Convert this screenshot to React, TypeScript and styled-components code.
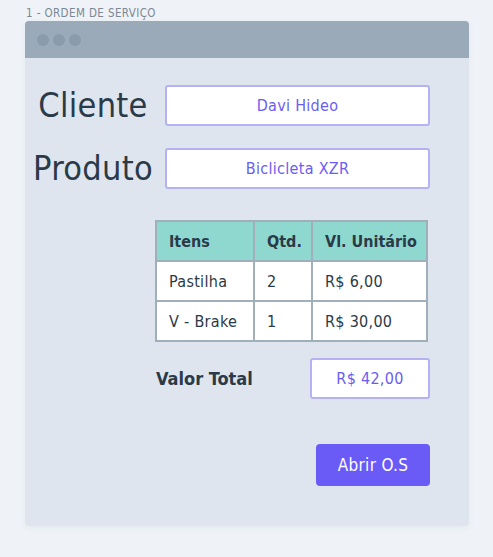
import React from "react";
import styled, { createGlobalStyle } from "styled-components";

const GlobalStyle = createGlobalStyle`
  body {
    margin: 0;
    background: #eff3f7;
    font-family: "DejaVu Sans Condensed", "Roboto", sans-serif;
  }
`;

const items = [
  { name: "Pastilha", qty: 2, price: "R$ 6,00" },
  { name: "V - Brake", qty: 1, price: "R$ 30,00" },
];

const App: React.FC = () => {
  return (
    <Page>
      <GlobalStyle />
      <Caption>1 - ORDEM DE SERVIÇO</Caption>
      <Window>
        <TitleBar>
          <Dot />
          <Dot />
          <Dot />
        </TitleBar>
        <Body>
          <FieldRow>
            <Label>Cliente</Label>
            <Field>Davi Hideo</Field>
          </FieldRow>
          <FieldRow>
            <Label>Produto</Label>
            <Field>Biclicleta XZR</Field>
          </FieldRow>
          <Table>
            <colgroup>
              <col style={{ width: 98 }} />
              <col style={{ width: 58 }} />
              <col style={{ width: 115 }} />
            </colgroup>
            <thead>
              <tr>
                <Th>Itens</Th>
                <Th>Qtd.</Th>
                <Th>Vl. Unitário</Th>
              </tr>
            </thead>
            <tbody>
              {items.map((item) => (
                <tr key={item.name}>
                  <Td>{item.name}</Td>
                  <Td>{item.qty}</Td>
                  <Td>{item.price}</Td>
                </tr>
              ))}
            </tbody>
          </Table>
          <TotalRow>
            <TotalLabel>Valor Total</TotalLabel>
            <TotalBox>R$ 42,00</TotalBox>
          </TotalRow>
          <ButtonRow>
            <OpenButton>Abrir O.S</OpenButton>
          </ButtonRow>
        </Body>
      </Window>
    </Page>
  );
};

const Page = styled.div`
  padding: 6px 24px 32px 25px;
  width: 444px;
`;

const Caption = styled.div`
  font-size: 11.5px;
  letter-spacing: 0.4px;
  color: #7b8794;
  line-height: 15px;
  margin-left: 1px;
`;

const Window = styled.div`
  background: #dfe5ee;
  border-radius: 4px;
  overflow: hidden;
  height: 505px;
  box-shadow: 0 2px 6px rgba(60, 80, 100, 0.06);
`;

const TitleBar = styled.div`
  height: 37px;
  background: #9baab8;
  display: flex;
  align-items: center;
  gap: 4px;
  padding-left: 12px;
`;

const Dot = styled.span`
  width: 12px;
  height: 12px;
  border-radius: 50%;
  background: #8a9bab;
`;

const Body = styled.div`
  padding: 27px 39px 0 2px;
  display: flex;
  flex-direction: column;
`;

const FieldRow = styled.div`
  display: flex;
  align-items: center;
  justify-content: space-between;
  height: 41px;
  margin-bottom: 22px;
`;

const Label = styled.div`
  flex: 1;
  text-align: center;
  padding-right: 6px;
  font-size: 34px;
  line-height: 41px;
  letter-spacing: 0.3px;
  color: #2b3a48;
`;

const Field = styled.div`
  width: 261px;
  height: 37px;
  box-sizing: content-box;
  background: #fff;
  border: 2px solid #b5b2f3;
  border-radius: 3px;
  display: flex;
  align-items: center;
  justify-content: center;
  color: #6a5ef2;
  font-size: 16px;
  letter-spacing: 0.3px;
`;

const Table = styled.table`
  align-self: flex-end;
  margin-top: 9px;
  margin-right: 2px;
  border-collapse: collapse;
  table-layout: fixed;
  width: 271px;
  border: 2px solid #a1afbb;
  font-size: 16px;
  letter-spacing: 0.3px;
  color: #2b3a48;
`;

const Th = styled.th`
  background: #8fd8cf;
  border: 2px solid #a1afbb;
  height: 38px;
  padding: 0 0 0 12px;
  text-align: left;
  font-weight: bold;
  white-space: nowrap;
  letter-spacing: 0;
`;

const Td = styled.td`
  background: #fff;
  border: 2px solid #a1afbb;
  height: 38px;
  padding: 0 0 0 12px;
  white-space: nowrap;
`;

const TotalRow = styled.div`
  display: flex;
  align-items: center;
  justify-content: space-between;
  margin-top: 16px;
  padding-left: 129px;
`;

const TotalLabel = styled.div`
  font-size: 18px;
  font-weight: bold;
  color: #2b3a48;
`;

const TotalBox = styled(Field)`
  width: 116px;
`;

const ButtonRow = styled.div`
  display: flex;
  justify-content: flex-end;
  margin-top: 45px;
`;

const OpenButton = styled.button`
  width: 114px;
  height: 42px;
  border: none;
  border-radius: 4px;
  background: #6a5af6;
  color: #fff;
  font-family: inherit;
  font-size: 17px;
  letter-spacing: 0.3px;
  cursor: pointer;
`;

export default App;
